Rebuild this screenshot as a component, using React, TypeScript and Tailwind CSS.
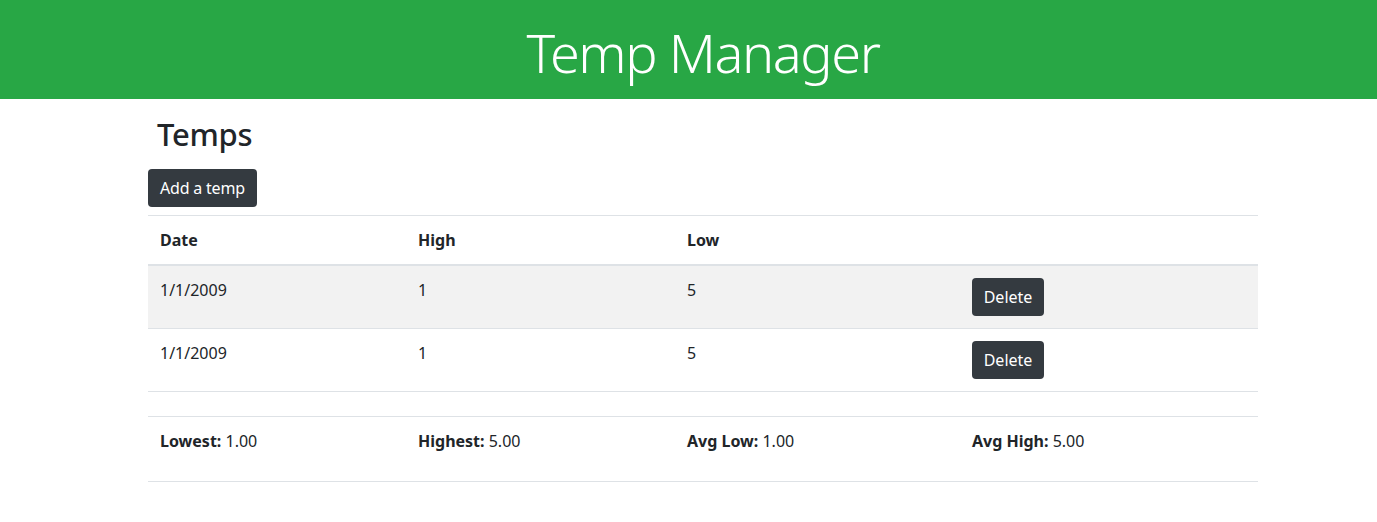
type Temp = { date: string; high: number; low: number };

const temps: Temp[] = [
  { date: "1/1/2009", high: 1, low: 5 },
  { date: "1/1/2009", high: 1, low: 5 },
];

export default function App() {
  return (
    <div className="min-h-[522px] bg-white text-[16px] leading-6 text-[#212529] font-['Noto_Sans',sans-serif]">
      <header className="flex h-[99px] items-center justify-center bg-[#28a745] pt-[5px] pl-[29px]">
        <h1 className="text-[54px] font-light leading-[1.2] tracking-[-1.4px] text-white">Temp Manager</h1>
      </header>

      <main className="ml-[148px] w-[1110px]">
        <h2 className="mt-[16px] mb-[16px] pl-[9px] text-[31px] font-medium leading-[38px] tracking-[-0.3px]">Temps</h2>
        <button className="h-[38px] rounded-[4px] bg-[#343a40] px-3 text-white tracking-[-0.2px]">Add a temp</button>

        <table className="mt-2 w-full border-collapse text-left">
          <thead>
            <tr className="border-t border-b-2 border-[#dee2e6]">
              <th className="w-[258px] p-3 align-bottom font-bold">Date</th>
              <th className="w-[269px] p-3 align-bottom font-bold">High</th>
              <th className="w-[285px] p-3 align-bottom font-bold">Low</th>
              <th className="p-3"></th>
            </tr>
          </thead>
          <tbody>
            {temps.map((t, i) => (
              <tr key={i} className={`border-b border-[#dee2e6] ${i % 2 === 0 ? "bg-[#f2f2f2]" : ""}`}>
                <td className="p-3 align-top">{t.date}</td>
                <td className="p-3 align-top">{t.high}</td>
                <td className="p-3 align-top">{t.low}</td>
                <td className="p-3 align-top">
                  <button className="h-[38px] w-[72px] rounded-[4px] bg-[#343a40] text-white">Delete</button>
                </td>
              </tr>
            ))}
          </tbody>
        </table>

        <table className="mt-[24px] w-full border-collapse text-left">
          <tbody>
            <tr className="border-y border-[#dee2e6]">
              <td className="w-[258px] p-3 align-top">
                <p className="mb-4"><b>Lowest:</b> 1.00</p>
              </td>
              <td className="w-[269px] p-3 align-top">
                <p className="mb-4"><b>Highest:</b> 5.00</p>
              </td>
              <td className="w-[285px] p-3 align-top">
                <p className="mb-4"><b>Avg Low:</b> 1.00</p>
              </td>
              <td className="p-3 align-top">
                <p className="mb-4"><b>Avg High:</b> 5.00</p>
              </td>
            </tr>
          </tbody>
        </table>
      </main>
    </div>
  );
}
